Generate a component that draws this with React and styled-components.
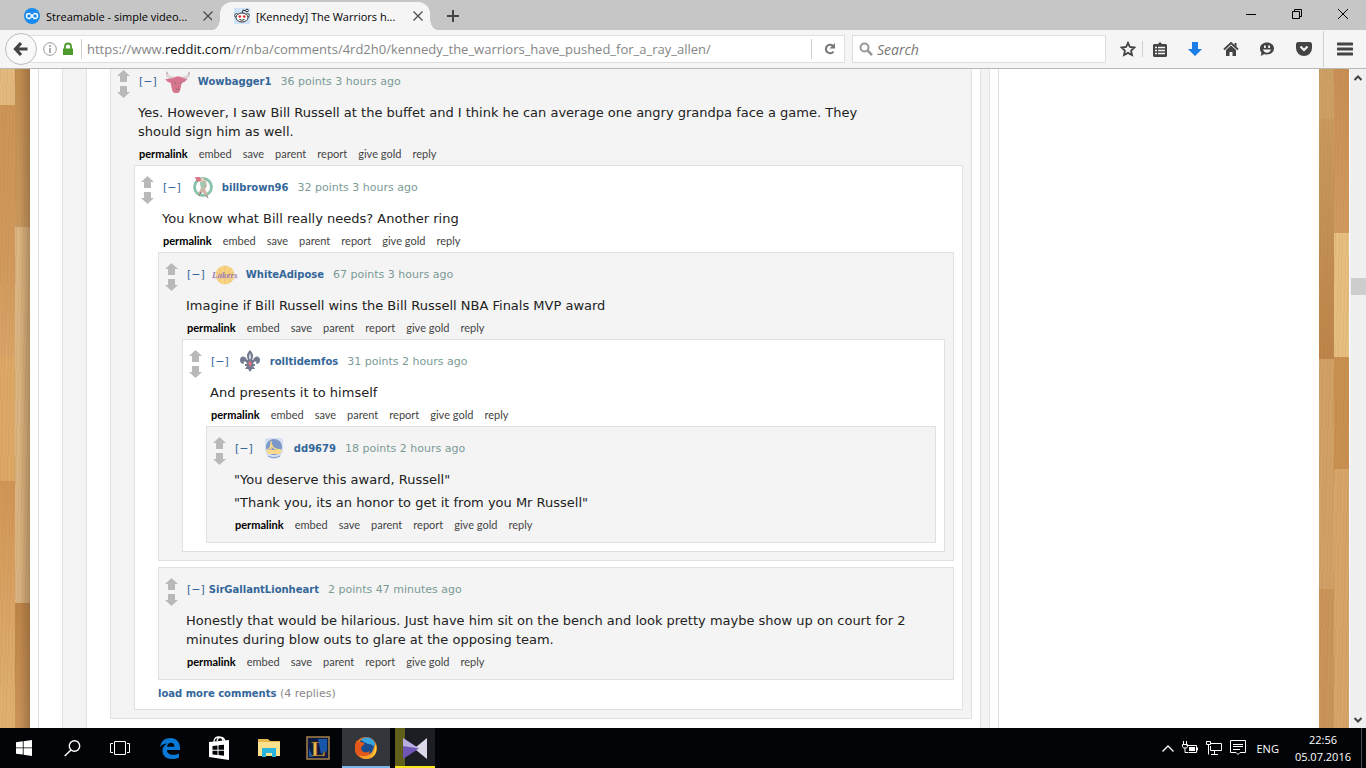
import React from 'react'
import styled, { createGlobalStyle, css } from 'styled-components'

const GlobalStyle = createGlobalStyle`
  * {
    box-sizing: border-box;
  }
  body {
    margin: 0;
    background: #fff;
    font-family: 'DejaVu Sans', sans-serif;
  }
  a {
    text-decoration: none;
  }
  p {
    margin: 0;
  }
  svg {
    flex: none;
  }
`
const uiFont = css`
  font-family: 'Open Sans', 'Noto Sans', sans-serif;
`
const plainButton = css`
  border: 0;
  padding: 0;
  background: none;
  display: flex;
  align-items: center;
  justify-content: center;
`

const Desktop = styled.div`
  height: 100vh;
  display: flex;
  flex-direction: column;
  overflow: hidden;
`

/* browser chrome */
const TabStrip = styled.div`
  flex: none;
  height: 30px;
  display: flex;
  background: #c6c6c6;
  padding-left: 10px;
`
const Tab = styled.div`
  ${uiFont}
  position: relative;
  display: flex;
  align-items: center;
  width: 210px;
  padding: 2px 4px 0 14px;
  gap: 6px;
  font-size: 11px;
  color: #000;
  ${({ $active }) => $active && css`
    margin-top: 2px;
    padding-top: 0;
    background: #f5f5f5;
    border-radius: 12px 12px 0 0;
    &::before,
    &::after {
      content: '';
      position: absolute;
      bottom: 0;
      width: 8px;
      height: 12px;
    }
    &::before {
      left: -8px;
      background: radial-gradient(ellipse 8px 12px at 0 0, #c6c6c6 98%, #f5f5f5);
    }
    &::after {
      right: -8px;
      background: radial-gradient(ellipse 8px 12px at 100% 0, #c6c6c6 98%, #f5f5f5);
    }
  `}
`
const TabTitle = styled.span`
  flex: 1;
  white-space: nowrap;
`
const IconButton = styled.button`
  ${plainButton}
  flex: none;
  width: ${({ $width }) => $width || 16}px;
  height: ${({ $height }) => $height || 16}px;
`
const WindowControls = styled.div`
  display: flex;
  margin-left: auto;
`
const NavBar = styled.div`
  flex: none;
  height: 39px;
  display: flex;
  align-items: center;
  background: #f5f5f5;
  border-bottom: 1px solid #b8b8b8;
  padding-left: 5px;
`
const BackButton = styled.button`
  ${plainButton}
  flex: none;
  width: 32px;
  height: 32px;
  border: 1px solid #bdbdbd;
  border-radius: 50%;
  background: #f9f9f9;
  z-index: 1;
`
const Field = styled.div`
  ${uiFont}
  display: flex;
  align-items: center;
  height: 28px;
  background: #fff;
  border: 1px solid #dedede;
`
const UrlField = styled(Field)`
  flex: 1;
  min-width: 0;
  margin-left: -16px;
  padding-left: 21px;
  gap: 4px;
`
const SearchField = styled(Field)`
  width: 254px;
  flex: none;
  margin: 0 8px 0 7px;
  padding-left: 6px;
  gap: 4px;
`
const UrlText = styled.div`
  flex: 1;
  min-width: 0;
  margin-left: 2px;
  padding-left: 5px;
  border-left: 1px solid #cfcfcf;
  font-size: 13px;
  line-height: 20px;
  color: #858585;
  white-space: nowrap;
  overflow: hidden;
  > b {
    font-weight: 400;
    color: #111;
  }
`
const SearchInput = styled.input`
  ${uiFont}
  width: 200px;
  border: 0;
  padding: 0;
  outline: 0;
  font-size: 14px;
  font-style: italic;
  &::placeholder {
    color: #777;
    opacity: 1;
  }
`
const Divider = styled.span`
  width: 1px;
  height: ${({ $height }) => $height}px;
  background: #cfcfcf;
`
const ToolIcons = styled.div`
  display: flex;
  align-items: center;
`

/* page */
const Viewport = styled.div`
  flex: 1;
  min-height: 0;
  display: flex;
`
const Wood = styled.div`
  flex: none;
  width: 30px;
  display: grid;
  grid-template-columns: 1fr 1fr;
`
const Planks = styled.div`
  background:
    linear-gradient(90deg, #6c4d2e00 30%, #6c4d2e${({ $shade }) => $shade || '00'}),
    repeating-linear-gradient(92deg, #a8682c1a 0 1px, #fff0 1px 4px, #a8682c14 4px 5px, #fff0 5px 7px),
    linear-gradient(${({ $stops }) => $stops});
`
const Page = styled.main`
  flex: 1;
  min-width: 0;
  display: flex;
  background: #fff;
  padding-left: 8px;
  overflow: hidden;
`
const Side = styled.aside`
  flex: none;
  width: 320px;
`
const Ancestor = styled.div`
  flex: 1;
  min-width: 0;
  display: flex;
  align-items: stretch;
  padding: 0 8px 0 23px;
  border: solid #e0e0e0;
  border-width: 0 1px;
  background: ${({ $odd }) => ($odd ? '#f4f4f4' : '#fff')};
`
const Thread = styled.div`
  flex: 1;
  min-width: 0;
  margin-top: -10px;
`
const CommentBox = styled.article`
  display: grid;
  grid-template-columns: 27px minmax(0, 1fr);
  padding-right: 8px;
  border: 1px solid #e0e0e0;
  background: ${({ $odd }) => ($odd ? '#f4f4f4' : '#fff')};
`
const Votes = styled.div`
  display: flex;
  flex-direction: column;
  gap: 4px;
  padding: 10px 0 0 6px;
`
const Tagline = styled.div`
  display: flex;
  align-items: center;
  height: 34px;
  padding: 8px 0 0 1px;
  font-size: 11px;
  color: #7b9a96;
  white-space: nowrap;
`
const Toggle = styled.a`
  color: #369;
`
const Flair = styled.span`
  width: 28px;
  height: 24px;
  margin: 0 6px 0 7px;
  opacity: 0.6;
`
const Author = styled.a`
  margin: 0 9px 0 ${({ $spaced }) => ($spaced ? 4 : 0)}px;
  font-size: 10px;
  font-weight: 700;
  color: #369;
`
const Body = styled.div`
  max-width: 760px;
  display: flex;
  flex-direction: column;
  gap: 4px;
  padding-top: 9px;
  font-size: 13px;
  line-height: 19px;
  color: #222;
`
const Actions = styled.div`
  display: flex;
  align-items: center;
  gap: 11px;
  height: 24px;
  padding-left: 1px;
  font-family: Lato, sans-serif;
  font-size: 11px;
  > a {
    color: #444;
  }
  > a:first-child {
    font-weight: 700;
    color: #000;
  }
`
const Replies = styled.div`
  grid-column: 1 / -1;
  display: flex;
  flex-direction: column;
  gap: 6px;
  padding: 0 0 ${({ $empty }) => ($empty ? 6 : 8)}px 23px;
`
const LoadMore = styled.div`
  font-size: 11px;
  line-height: 15px;
  color: #888;
  > a {
    font-size: 10px;
    font-weight: 700;
    color: #369;
  }
`
const ScrollBar = styled.div`
  flex: none;
  width: 17px;
  display: flex;
  flex-direction: column;
  align-items: center;
  justify-content: space-between;
  background: #f0f0f0;
  border-left: 1px solid #fff;
`
const ScrollTrack = styled.div`
  flex: 1;
  width: 15px;
  padding-top: 192px;
`
const ScrollThumb = styled.div`
  height: 17px;
  background: #cdcdcd;
`

/* taskbar */
const TaskBar = styled.footer`
  ${uiFont}
  flex: none;
  height: 40px;
  display: flex;
  background: #020408;
  color: #fff;
  font-size: 11px;
`
const Task = styled.button`
  ${plainButton}
  width: ${({ $width }) => $width || 48}px;
  border-bottom: 2px solid ${({ $line }) => $line || 'transparent'};
  border-top: 2px solid transparent;
  background: ${({ $fill }) => $fill || 'none'};
  background-clip: border-box;
  margin-right: ${({ $gap }) => $gap || 0}px;
`
const Tray = styled.div`
  margin-left: auto;
  display: flex;
  align-items: center;
  gap: 8px;
`
const Language = styled.span`
  margin-left: 2px;
`
const Clock = styled.div`
  margin-left: 8px;
  line-height: 17px;
  text-align: center;
`
const ShowDesktop = styled.button`
  ${plainButton}
  width: 5px;
  height: 40px;
  border-left: 1px solid #4a4c50;
  margin-left: 2px;
`

const Svg = ({ w = 16, h = w, box, children }) => (
  <svg width={w} height={h} viewBox={box || `0 0 ${w} ${h}`} fill='none' aria-hidden='true'>
    {children}
  </svg>
)

const Arrow = ({ down }) => (
  <Svg w={13} h={12}>
    <path
      fill='#b9b9b9'
      d={down ? 'M3 0h7v6h3L6.500 12 0 6h3z' : 'M6.500 0L13 6h-3v6H3V6H0z'}
    />
  </Svg>
)

const CloseIcon = () => (
  <Svg w={12}>
    <path d='M1.500 1.500l9 9M10.500 1.500l-9 9' stroke='#4d4d4d' strokeWidth='1.300' />
  </Svg>
)

const flairs = {
  bulls: (
    <Svg w={28} h={24} box='-1 -3 30 26'>
      <path d='M2 0c-1 4 0 7 5 8l2-2C5 6 3 4 2 0zM26 0c1 4 0 7-5 8l-2-2c4 0 6-2 7-6z' fill='#f0e4e4' stroke='#86626a' strokeWidth='.7' />
      <path d='M8 7l4-2h4l4 2 4 1-3 3-3 1-1 5-1 4-2 2h-4l-2-2-1-4-1-5-3-1-3-3z' fill='#c4224b' />
      <path d='M9 11l3 2M19 11l-3 2M12 19h4' stroke='#501020' strokeWidth='1' />
    </Svg>
  ),
  celtics: (
    <Svg w={28} h={24} box='-1 0 28 24'>
      <circle cx='14' cy='12' r='8.500' fill='#fff' stroke='#3a9a70' strokeWidth='2.800' />
      <path d='M6 2h5l1 4-4 1z' fill='#c02036' />
      <path d='M11 7l3-2 3 1 1 5-2 3 2 4 1 3h-3l-2-4-3 3-2-1 3-6z' fill='#a8846c' />
      <path d='M11 7h5v5l-4 1z' fill='#5aa87c' />
      <path d='M12 3h3v3h-3z' fill='#d8a888' />
      <path d='M17 20l2 3M12 17l-2 4' stroke='#444' strokeWidth='1.300' />
    </Svg>
  ),
  lakers: (
    <Svg w={28} h={24}>
      <circle cx='13' cy='13' r='9.500' fill='#fdbf3a' />
      <path d='M4 10c6 3 13 3 18 0M13 4v18M7 6c3 4 3 10 0 14M19 6c-3 4-3 10 0 14' stroke='#d98d12' strokeWidth='.6' />
      <path d='M1 16h25' stroke='#b9a0cc' strokeWidth='.6' />
      <text x='0' y='16' fontFamily='Liberation Serif, serif' fontSize='9' fontStyle='italic' fontWeight='700' fill='#62308c'>Lakers</text>
    </Svg>
  ),
  pelicans: (
    <Svg w={28} h={24}>
      <path d='M14 1c-3 3-4 6-2 10h-1C9 6 4 7 4 11c0 3 2 4 4 4-1-2 0-3 2-2l1 2H9v2h2l-2 3h3l2 3 2-3h3l-2-3h2v-2h-2l1-2c2-1 3 0 2 2 2 0 4-1 4-4 0-4-5-5-7 0h-1c2-4 1-7-2-10z' fill='#1a2348' />
      <path d='M14 4l-1 4 1 3 1-3z' fill='#dfe4f0' />
      <path d='M12 14l2-2 2 2-2 4z' fill='#c8102e' />
    </Svg>
  ),
  warriors: (
    <Svg w={28} h={24}>
      <path d='M5 3l3-1h12l3 1v10c0 5-4 10-9 10S5 18 5 13z' fill='#c4d4f2' />
      <circle cx='14' cy='11' r='8' fill='#2a5cac' />
      <path d='M6 14h16l-2 4H8z' fill='#fdc94a' />
      <path d='M11 5v10M7 14c3-1 4-4 4-7 1 5 5 7 10 7' stroke='#fdc94a' strokeWidth='1.300' />
      <path d='M8 20c4 2 8 2 12 0' stroke='#2a5cac' strokeWidth='1' />
    </Svg>
  )
}

const thread = {
  author: 'Wowbagger1',
  flair: 'bulls',
  meta: '36 points 3 hours ago',
  text: ['Yes. However, I saw Bill Russell at the buffet and I think he can average one angry grandpa face a game. They should sign him as well.'],
  replies: [
    {
      author: 'billbrown96',
      flair: 'celtics',
      meta: '32 points 3 hours ago',
      text: ['You know what Bill really needs? Another ring'],
      more: '(4 replies)',
      replies: [
        {
          author: 'WhiteAdipose',
          flair: 'lakers',
          meta: '67 points 3 hours ago',
          text: ['Imagine if Bill Russell wins the Bill Russell NBA Finals MVP award'],
          replies: [
            {
              author: 'rolltidemfos',
              flair: 'pelicans',
              meta: '31 points 2 hours ago',
              text: ['And presents it to himself'],
              replies: [
                {
                  author: 'dd9679',
                  flair: 'warriors',
                  meta: '18 points 2 hours ago',
                  text: ['"You deserve this award, Russell"', '"Thank you, its an honor to get it from you Mr Russell"']
                }
              ]
            }
          ]
        },
        {
          author: 'SirGallantLionheart',
          meta: '2 points 47 minutes ago',
          text: ['Honestly that would be hilarious. Just have him sit on the bench and look pretty maybe show up on court for 2 minutes during blow outs to glare at the opposing team.']
        }
      ]
    }
  ]
}

const actions = ['permalink', 'embed', 'save', 'parent', 'report', 'give gold', 'reply']

function Comment ({ comment, odd }) {
  const { author, flair, meta, text, replies = [], more } = comment
  return (
    <CommentBox $odd={odd}>
      <Votes>
        <IconButton $width={13} $height={12} aria-label='upvote'><Arrow /></IconButton>
        <IconButton $width={13} $height={12} aria-label='downvote'><Arrow down /></IconButton>
      </Votes>
      <div>
        <Tagline>
          <Toggle href='#'>[−]</Toggle>
          {flair && <Flair>{flairs[flair]}</Flair>}
          <Author href='#' $spaced={!flair}>{author}</Author>
          <span>{meta}</span>
        </Tagline>
        <Body>
          {text.map((line) => <p key={line}>{line}</p>)}
        </Body>
        <Actions>
          {actions.map((name) => <a href='#' key={name}>{name}</a>)}
        </Actions>
      </div>
      <Replies $empty={!replies.length}>
        {replies.map((reply) => <Comment key={reply.author} comment={reply} odd={!odd} />)}
        {more && <LoadMore><a href='#'>load more comments</a> {more}</LoadMore>}
      </Replies>
    </CommentBox>
  )
}

function BrowserTabs () {
  return (
    <TabStrip>
      <Tab>
        <Svg w={16}>
          <circle cx='8' cy='8' r='8' fill='#1a8cf0' />
          <path d='M8 8C6.500 6 5.800 5.500 5 5.500a2.500 2.500 0 000 5c2 0 4-5 6-5a2.500 2.500 0 010 5C10.200 10.500 9.500 10 8 8z' stroke='#fff' strokeWidth='1.400' />
        </Svg>
        <TabTitle>Streamable - simple video...</TabTitle>
        <IconButton aria-label='Close tab'><CloseIcon /></IconButton>
      </Tab>
      <Tab $active>
        <Svg w={16}>
          <path fill='#cee3f8' d='M0 0h16v16H0z' />
          <path d='M8 6l1-4 3 1' stroke='#333' />
          <circle cx='13' cy='2.500' r='1.300' fill='#fff' stroke='#333' />
          <circle cx='2.500' cy='7.500' r='1.800' fill='#fff' stroke='#333' />
          <circle cx='13.500' cy='7.500' r='1.800' fill='#fff' stroke='#333' />
          <ellipse cx='8' cy='9.500' rx='6' ry='4.500' fill='#fff' stroke='#333' />
          <circle cx='5.800' cy='8.500' r='1.300' fill='#f02020' />
          <circle cx='10.200' cy='8.500' r='1.300' fill='#f02020' />
          <path d='M5.500 11.500q2.500 1.500 5 0' stroke='#333' />
        </Svg>
        <TabTitle>[Kennedy] The Warriors h...</TabTitle>
        <IconButton aria-label='Close tab'><CloseIcon /></IconButton>
      </Tab>
      <IconButton $width={46} $height={32} aria-label='New tab'>
        <Svg w={12}><path d='M6 0v12M0 6h12' stroke='#444' strokeWidth='2' /></Svg>
      </IconButton>
      <WindowControls>
        <IconButton $width={46} $height={28} aria-label='Minimize'>
          <Svg w={10}><path d='M0 5.500h10' stroke='#000' /></Svg>
        </IconButton>
        <IconButton $width={46} $height={28} aria-label='Restore'>
          <Svg w={10}><path d='M.5 2.500h7v7h-7zM2.500 2.500v-2h7v7h-2' stroke='#000' /></Svg>
        </IconButton>
        <IconButton $width={46} $height={28} aria-label='Close'>
          <Svg w={10}><path d='M0 0l10 10M10 0L0 10' stroke='#000' /></Svg>
        </IconButton>
      </WindowControls>
    </TabStrip>
  )
}

function Toolbar () {
  return (
    <NavBar>
      <BackButton aria-label='Back'>
        <Svg w={16}><path d='M8 2L2.500 8 8 14M3 8h11.500' stroke='#444' strokeWidth='3.200' /></Svg>
      </BackButton>
      <UrlField>
        <Svg w={14}>
          <circle cx='7' cy='7' r='6.300' stroke='#999' />
          <path d='M7 3v2M7 6v5' stroke='#999' strokeWidth='1.600' />
        </Svg>
        <Svg w={14}>
          <path d='M2 6.500h10V13H2z' fill='#4c9a2a' />
          <path d='M4 7V4.500a3 3 0 016 0V7' stroke='#4c9a2a' strokeWidth='1.800' />
        </Svg>
        <UrlText>
          https://www.<b>reddit.com</b>/r/nba/comments/4rd2h0/kennedy_the_warriors_have_pushed_for_a_ray_allen/
        </UrlText>
        <Divider $height={20} />
        <IconButton $width={28} $height={26} aria-label='Reload'>
          <Svg w={12}>
            <path d='M9.500 8.500a4.200 4.200 0 11-.5-5.500' stroke='#777' strokeWidth='2' />
            <path d='M11 0v5.500H5.500z' fill='#777' />
          </Svg>
        </IconButton>
      </UrlField>
      <SearchField>
        <Svg w={14}>
          <circle cx='5.500' cy='5.500' r='4' stroke='#999' strokeWidth='2' />
          <path d='M8.500 8.500L13 13' stroke='#999' strokeWidth='2.500' />
        </Svg>
        <SearchInput placeholder='Search' aria-label='Search' />
      </SearchField>
      <ToolIcons>
        <IconButton $width={28} $height={28} aria-label='Bookmark'>
          <Svg w={16}><path d='M8 1.800l1.900 4.200 4.500.5-3.300 3.100.9 4.500L8 11.900l-4 2.200.9-4.500L1.600 6.500l4.500-.5z' stroke='#444' strokeWidth='1.800' /></Svg>
        </IconButton>
        <Divider $height={16} />
        <IconButton $width={34} $height={28} aria-label='Bookmarks list'>
          <Svg w={14} h={15}>
            <path fill='#444' d='M5 2l2-2 2 2h4l1 1v11l-1 1H1l-1-1V3l1-1z' />
            <path d='M2 5.500h2M5 5.500h7M2 8.500h2M5 8.500h7M2 11.500h2M5 11.500h7' stroke='#f5f5f5' strokeWidth='1.500' />
          </Svg>
        </IconButton>
        <IconButton $width={36} $height={28} aria-label='Downloads'>
          <Svg w={14}><path fill='#1a7ee8' d='M4 0h6v7h4l-7 7-7-7h4z' /></Svg>
        </IconButton>
        <IconButton $width={36} $height={28} aria-label='Home'>
          <Svg w={16}>
            <path d='M1 8.500L8 2l7 6.500' stroke='#444' strokeWidth='1.800' />
            <path fill='#444' d='M3 9l5-4.500L13 9v6h-3.500v-4h-3v4H3zM11.500 2h2v4l-2-2z' />
          </Svg>
        </IconButton>
        <IconButton $width={36} $height={28} aria-label='Hello'>
          <Svg w={14}>
            <path fill='#444' d='M7 .5C11 .5 14 3 14 6.500S11 12.500 7 12.500c-1 0-2 0-3-.5-1 1-2 1.500-3.500 1.500.7-.8 1-1.800.8-3C.5 9.500 0 8 0 6.500 0 3 3 .5 7 .5z' />
            <path fill='#f5f5f5' d='M4 3.500h1.800V6H4zM8.200 3.500H10V6H8.200zM3 7.500h8c-.5 2-2 3.200-4 3.200s-3.500-1.200-4-3.200z' />
          </Svg>
        </IconButton>
        <IconButton $width={38} $height={28} aria-label='Pocket'>
          <Svg w={16} h={14}>
            <path fill='#444' d='M1.500 0h13L16 1.500V6a8 8 0 01-16 0V1.500z' />
            <path d='M4.500 4.500L8 8l3.500-3.500' stroke='#f5f5f5' strokeWidth='2.200' />
          </Svg>
        </IconButton>
        <Divider $height={36} />
        <IconButton $width={42} $height={28} aria-label='Menu'>
          <Svg w={16} h={14}><path d='M1 2h14M1 7h14M1 12h14' stroke='#444' strokeWidth='3' strokeLinecap='round' /></Svg>
        </IconButton>
      </ToolIcons>
    </NavBar>
  )
}

function WindowsTasks () {
  return (
    <>
      <Task aria-label='Start'>
        <Svg w={16}><path fill='#fff' d='M0 2.300l6.800-1v6.200H0zM7.600 1.200L16 0v7.500H7.600zM0 8.300h6.800v6.300L0 13.700zM7.600 8.300H16V16l-8.400-1.200z' /></Svg>
      </Task>
      <Task aria-label='Search'>
        <Svg w={17}>
          <circle cx='10.500' cy='6' r='5.200' stroke='#fff' strokeWidth='1.400' />
          <path d='M7 10L.7 16' stroke='#fff' strokeWidth='1.500' />
        </Svg>
      </Task>
      <Task aria-label='Task view'>
        <Svg w={20} h={14}><path d='M4.500.5h11v13h-11zM3 2.500H.500v9H3M17 2.500h2.500v9H17' stroke='#fff' /></Svg>
      </Task>
      <Task $width={51} aria-label='Edge'>
        <Svg w={20} h={21}>
          <path fill='#0a78d6' d='M0 9C1 3 5 0 10.500 0 16 0 20 4 20 9.500V12H7c0 3 2.500 4.800 6 4.800 2.500 0 4.500-.7 6-1.600v4.300c-2 1-4.200 1.500-7 1.500C6 21 2.500 17.500 2.500 13c0-4 2.500-6.500 5-7.500C4 5.500 1.500 7 0 9zm7-.2h7.500c0-2.500-1.500-4-3.500-4S7.500 6.300 7 8.800z' />
        </Svg>
      </Task>
      <Task aria-label='Store'>
        <Svg w={22} h={24}>
          <path fill='#fff' d='M1 6l20-2v20L1 21z' />
          <path d='M6 6c0-6 8-7 9-1M9 5c1-5 6-5 8 0' stroke='#fff' strokeWidth='1.300' />
          <path fill='#020408' d='M4.500 10l5-.6v4.300h-5zM10.500 9.300l5.500-.6v5h-5.500zM4.500 14.700h5V19l-5-.6zM10.500 14.700H16v5l-5.500-.6z' />
        </Svg>
      </Task>
      <Task $width={51} aria-label='File Explorer'>
        <Svg w={22} h={18}>
          <path fill='#e8b84e' d='M0 0h10l2 2h10v15H0z' />
          <path fill='#fbe08e' d='M0 3h22v14H0z' />
          <path fill='#28b4dc' d='M4 9h14v9h-4v-4H8v4H4z' />
        </Svg>
      </Task>
      <Task aria-label='League of Legends'>
        <Svg w={24}>
          <path fill='#0c1a40' stroke='#a8814e' strokeWidth='1.500' d='M1 1h22v22H1z' />
          <path fill='#1756a8' d='M12 3h9v12l-6 3zM3 12l4 9H3z' />
          <text x='5' y='20' fontFamily='Liberation Serif, serif' fontSize='22' fontWeight='700' fill='#e8b850' stroke='#5c3c10' strokeWidth='.5'>L</text>
        </Svg>
      </Task>
      <Task $fill='#33363b' $line='#7ab8ea' $gap={5} aria-label='Firefox'>
        <Svg w={22}>
          <circle cx='11' cy='11' r='11' fill='#ee7a1c' />
          <circle cx='12' cy='9' r='8.500' fill='#1a4c90' />
          <path fill='#3aa4dc' d='M6 3c4-4 11-3 14 3l-1 4c-2-3-4-3-6-3L9 5z' />
          <path fill='#e4581c' d='M1 5c0-1 1-2 1-2 0 2 2 2 4 2l3 1c1 1 0 2-2 3l-1 2c0 4 5 6 9 3-1 6-8 8-12 5C-1 16-1 9 1 5z' />
          <path fill='#f8a02c' d='M4 18c6 3 12 0 14-5l2-6c3 6 1 15-9 15-3 0-6-2-7-4z' />
          <path fill='#ffd83c' d='M20 6c3 6 1 13-6 15 4-2 7-6 6-15z' />
        </Svg>
      </Task>
      <Task
        $width={40}
        $fill='linear-gradient(90deg, #61601a 10px, #1c1e24 10px)'
        $line='#f8e71c'
        aria-label='KMPlayer'
      >
        <Svg w={24} h={21}>
          <path fill='#6f55b8' d='M0 0l16 10.500L0 21z' />
          <path fill='#b9aee0' d='M0 0l16 10.500L0 8z' />
          <path fill='#dcd8ea' d='M24 0v21L13 12l3-1.500L13 9z' />
        </Svg>
      </Task>
    </>
  )
}

export default function App () {
  return (
    <Desktop>
      <GlobalStyle />
      <BrowserTabs />
      <Toolbar />
      <Viewport>
        <Wood>
          <Planks $stops='#e2b87e 0 36px, #cc9456 36px, #d09a5c 200px, #d8a468 288px, #dca866 288px 412px, #d09456 412px, #deb070 640px' />
          <Planks $shade='66' $stops='#c08c50 0, #c8985e 158px, #dab482 158px, #d8b280 534px, #bc8448 534px, #c89258 650px' />
        </Wood>
        <Page>
          <Ancestor>
            <Ancestor $odd>
              <Ancestor>
                <Thread>
                  <Comment comment={thread} odd />
                </Thread>
              </Ancestor>
            </Ancestor>
          </Ancestor>
          <Side />
        </Page>
        <Wood>
          <Planks $stops='#cca064 0 50px, #c89a5c 50px, #bc8448 290px, #d0a066 290px 520px, #c89458 520px' />
          <Planks $stops='#c88e54 0, #d09a5e 164px, #e6be80 164px 288px, #c89050 288px 400px, #d6a468 400px' />
        </Wood>
        <ScrollBar>
          <IconButton $height={17} aria-label='Scroll up'>
            <Svg w={8} h={6}><path d='M.5 5L4 1.500 7.500 5' stroke='#444' strokeWidth='2' /></Svg>
          </IconButton>
          <ScrollTrack><ScrollThumb /></ScrollTrack>
          <IconButton $height={17} aria-label='Scroll down'>
            <Svg w={8} h={6}><path d='M.5 1L4 4.500 7.500 1' stroke='#444' strokeWidth='2' /></Svg>
          </IconButton>
        </ScrollBar>
      </Viewport>
      <TaskBar>
        <WindowsTasks />
        <Tray>
          <Svg w={12} h={7}><path d='M.5 6.500L6 1l5.500 5.500' stroke='#fff' strokeWidth='1.300' /></Svg>
          <Svg w={16} h={14}>
            <path d='M4.500 4.500h10v7h-8M15.500 6.500v3M1.500 0v3M4.500 0v3M.5 3.500h5v2l-1 1.500h-3L.5 5.500zM3 7v4.500h3' stroke='#fff' />
            <path fill='#fff' d='M7 6h6v4H7z' />
          </Svg>
          <Svg w={16} h={14}>
            <path d='M5 2.500h10.500v7h-11V5M8.500 10v3M5 13.500h7M.5.5h4v3h-4zM2.500 4v9.500' stroke='#fff' />
          </Svg>
          <Svg w={16} h={16}>
            <path d='M.5.5h15v12H10L8 14.500 6 12.500H.5zM3 4.500h10M3 6.500h10M3 9.500h7' stroke='#fff' />
          </Svg>
          <Language>ENG</Language>
          <Clock>
            22:56
            <br />
            05.07.2016
          </Clock>
          <ShowDesktop aria-label='Show desktop' />
        </Tray>
      </TaskBar>
    </Desktop>
  )
}
